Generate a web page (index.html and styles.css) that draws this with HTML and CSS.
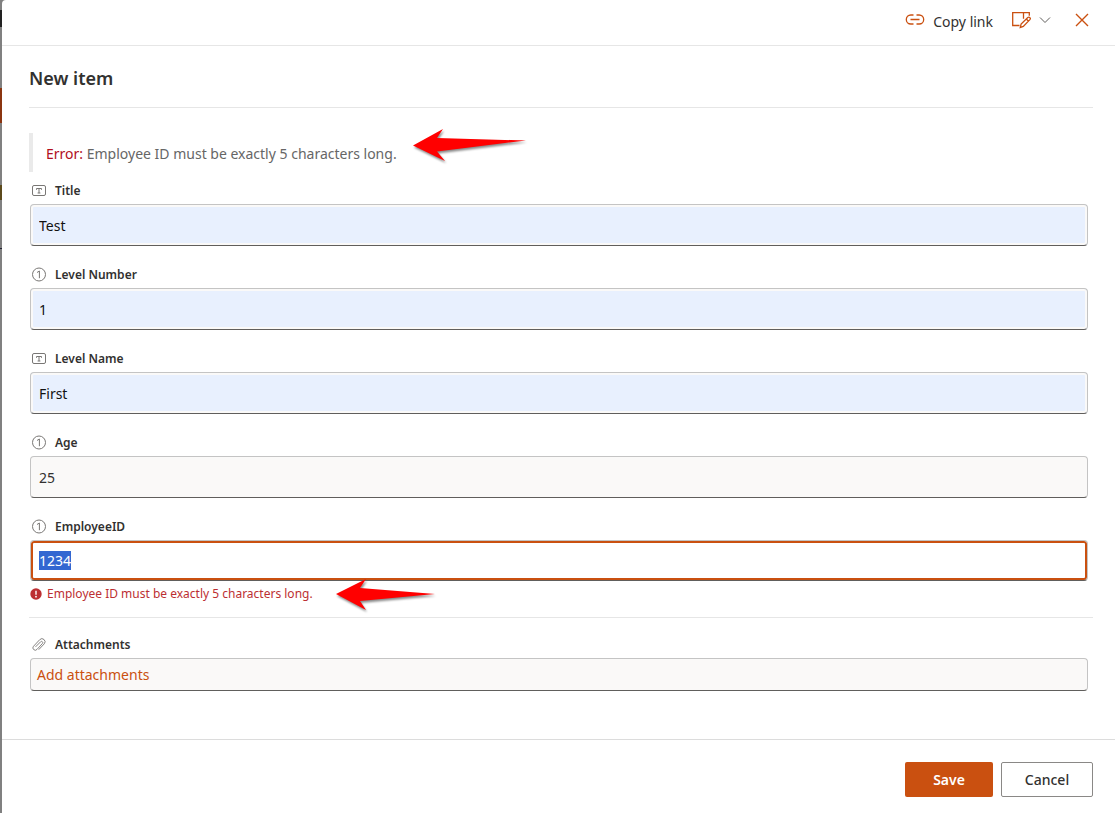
FILE: index.html
```html
<!DOCTYPE html>
<html lang="en">
<head>
<meta charset="utf-8">
<title>New item</title>
<link rel="stylesheet" href="styles.css">
</head>
<body>
<svg class="sprite" aria-hidden="true">
  <symbol id="icon-text" viewBox="0 0 16 16">
    <rect x="1.5" y="2.5" width="13" height="10" rx="1.5" fill="none" stroke="currentColor"/>
    <path d="M5.5 6.8V5.5h5v1.3M8 5.5v4.6M6.6 10h2.8" fill="none" stroke="currentColor"/>
  </symbol>
  <symbol id="icon-number" viewBox="0 0 16 16">
    <circle cx="8" cy="7.5" r="6.5" fill="none" stroke="currentColor"/>
    <path d="M6 5.5 8.4 4V11.2" fill="none" stroke="currentColor"/>
  </symbol>
  <symbol id="icon-clip" viewBox="0 0 16 16">
    <path d="M4.8 9.6 9.6 4.8a1.2 1.2 0 0 1 1.8 1.7L6 12.4a2.3 2.3 0 0 1-3.5-3.1L8.7 2.7a3 3 0 0 1 4.5 4.2L8 12.4" fill="none" stroke="currentColor" stroke-width=".9" stroke-linecap="round"/>
  </symbol>
</svg>
<div class="page">
  <div class="backdrop" aria-hidden="true"><i class="mark logo"></i><i class="mark accent"></i><i class="mark gold"></i><i class="mark line"></i></div>
  <main class="panel">
    <header class="toolbar">
      <button class="tool copy" type="button">
        <svg width="20" height="14" viewBox="0 0 20 14" fill="none" stroke="currentColor" stroke-width="1.3"><path d="M8.5 2H5.8a4.5 4.5 0 0 0 0 9h2.7M11.5 2h2.7a4.5 4.5 0 0 1 0 9h-2.7M5.5 6.5h9"/></svg>
        <span>Copy link</span>
      </button>
      <button class="tool edit" type="button" aria-label="Edit form">
        <svg width="20" height="18" viewBox="0 0 20 18" fill="none" stroke="currentColor" stroke-width="1.3"><path d="M8.5 14.5H1.7V1.6h10.8v5.8M12.5 1.6h5.8v3.2M12.5 1.6v6.2M9.3 16.4l.8-3.3 6.7-6.6c1.5-1.1 3.3.7 2.1 2.1l-6.6 6.8zM15.3 8l2 2"/></svg>
        <svg class="chevron" width="12" height="8" viewBox="0 0 12 8" fill="none" stroke="currentColor"><path d="m1 1.5 5 5 5-5"/></svg>
      </button>
      <button class="tool close" type="button" aria-label="Close">
        <svg width="14" height="14" viewBox="0 0 14 14" fill="none" stroke="currentColor" stroke-width="1.4"><path d="m1 1 12 12M13 1 1 13"/></svg>
      </button>
    </header>
    <form class="form" id="item-form">
      <h1>New item</h1>
      <div class="summary" role="alert">
        <p><span class="error-word">Error:</span> Employee ID must be exactly 5 characters long.</p>
        <svg class="arrow arrow-top" width="113" height="32" viewBox="0 0 113 32" aria-hidden="true"><path d="M0 16.5 30 0 24 9 113 11.5 24 22.5 32 32Z" fill="red"/></svg>
      </div>
      <div class="fields">
        <div class="field">
          <label for="title"><svg class="icon"><use href="#icon-text"/></svg>Title</label>
          <input class="box filled" id="title" type="text" value="Test">
        </div>
        <div class="field">
          <label for="level-number"><svg class="icon"><use href="#icon-number"/></svg>Level Number</label>
          <input class="box filled" id="level-number" type="text" inputmode="numeric" value="1">
        </div>
        <div class="field">
          <label for="level-name"><svg class="icon"><use href="#icon-text"/></svg>Level Name</label>
          <input class="box filled" id="level-name" type="text" value="First">
        </div>
        <div class="field">
          <label for="age"><svg class="icon"><use href="#icon-number"/></svg>Age</label>
          <input class="box" id="age" type="text" inputmode="numeric" value="25">
        </div>
        <div class="field">
          <label for="employee-id"><svg class="icon"><use href="#icon-number"/></svg>EmployeeID</label>
          <input class="box invalid" id="employee-id" type="text" inputmode="numeric" value="1234" aria-invalid="true" aria-describedby="employee-error">
          <div class="message">
            <svg width="12" height="12" viewBox="0 0 12 12" aria-hidden="true"><circle cx="6" cy="6" r="5.7" fill="#bc2f32"/><path d="M6 2.7v4" stroke="#fff" stroke-width="1.4"/><circle cx="6" cy="8.7" r=".9" fill="#fff"/></svg>
            <span id="employee-error">Employee ID must be exactly 5 characters long.</span>
            <svg class="arrow arrow-bottom" width="99" height="31" viewBox="0 0 99 31" aria-hidden="true"><path d="M0 15 30 0 24 9 99 15 24 22 30 31Z" fill="red"/></svg>
          </div>
        </div>
      </div>
      <div class="attachments">
        <div class="field">
          <label for="attach"><svg class="icon"><use href="#icon-clip"/></svg>Attachments</label>
          <button class="box attach" id="attach" type="button" aria-label="Add attachments">Add attachments</button>
        </div>
      </div>
    </form>
    <footer class="actions">
      <button class="action save" type="submit" form="item-form">Save</button>
      <button class="action cancel" type="button">Cancel</button>
    </footer>
  </main>
</div>
<script src="main.js"></script>
</body>
</html>
```

FILE: styles.css
```css
* { box-sizing: border-box; }
body { margin: 0; background: #fff; color: #323130; font-family: "Noto Sans", "Open Sans", sans-serif; font-size: 14px; line-height: 20px; }
button, input { font: inherit; color: inherit; }
button { border: 0; background: none; padding: 0; cursor: pointer; }
h1, p { margin: 0; }
svg { flex: none; }
.sprite { position: absolute; width: 0; height: 0; }

.page { display: grid; grid-template-columns: 2px 1fr; min-height: 100vh; background: #808080; }
.backdrop { position: relative; overflow: hidden; background: #808080; }
.mark { position: absolute; left: 0; width: 2px; }
.logo { top: 10px; height: 17px; background: #222; }
.accent { top: 88px; height: 35px; background: #8b3510; }
.gold { top: 185px; height: 15px; background: #5c4a1c; }
.line { top: 248px; height: 1px; background: #223; }

.panel { display: flex; flex-direction: column; background: #fff; border-top-left-radius: 4px; }
.toolbar { display: flex; justify-content: flex-end; align-items: center; height: 46px; padding: 0 26px 6px 0; border-bottom: 1px solid #e6e6e6; color: #ca5010; }
.tool { display: flex; align-items: center; }
.copy { gap: 8px; margin-right: 18px; }
.copy span { padding-top: 4px; color: #323130; }
.edit { gap: 8px; margin-right: 24px; }
.chevron { color: #605e5c; }

.form { flex: 1; padding: 0 22px 0 27px; }
h1 { padding: 19px 0 16px; border-bottom: 1px solid #e6e6e6; font-size: 18px; line-height: 26px; font-weight: 600; }
.summary { display: flex; align-items: center; height: 39px; margin: 25px 0 9px; padding: 3px 0 0 13px; border-left: 4px solid #eaeaea; color: #666; }
.error-word { color: #b10e1c; }
.fields { display: grid; gap: 19px; padding-bottom: 13px; }
.field { display: grid; gap: 3px; margin: 0 5px 0 1px; }
.field label { display: flex; align-items: center; gap: 8px; padding-left: 1px; font-size: 12px; font-weight: 600; }
.icon { width: 16px; height: 16px; color: #797775; }
.box { width: 100%; height: 42px; padding: 0 8px; border: 1px solid #c4c4c4; border-bottom-color: #605e5c; border-radius: 4px; background: #faf9f8; outline: 0; }
.filled { box-shadow: inset 0 0 0 2px #faf9f8; background: #e8f0fe; color: #111; }
.invalid { height: 41px; box-shadow: inset 0 0 0 2px #ca5010; background: #fff; }
.invalid::selection { background: #3367d1; color: #fff; }
.message { display: flex; align-items: center; gap: 5px; color: #bc2f32; font-size: 12px; }
.arrow { filter: drop-shadow(1px 2px 1px #888); overflow: visible; }
.arrow-top { margin: 0 0 18px 16px; }
.arrow-bottom { margin: -6px 0 -6px 18px; }
.attachments { padding-top: 17px; border-top: 1px solid #e6e6e6; }
.attachments .box { height: 33px; padding: 0 6px; color: #ca5010; text-align: left; }

.actions { display: flex; justify-content: flex-end; gap: 8px; padding: 22px 22px 16px; border-top: 1px solid #dcdcdc; }
.action { height: 35px; border-radius: 2px; font-weight: 600; }
.save { width: 88px; background: #ca5010; color: #fff; }
.cancel { width: 92px; border: 1px solid #8a8886; background: #fff; font-weight: 500; }
```

FILE: main.js
```js
const employeeId = document.getElementById("employee-id");
employeeId.focus();
employeeId.select();
```
